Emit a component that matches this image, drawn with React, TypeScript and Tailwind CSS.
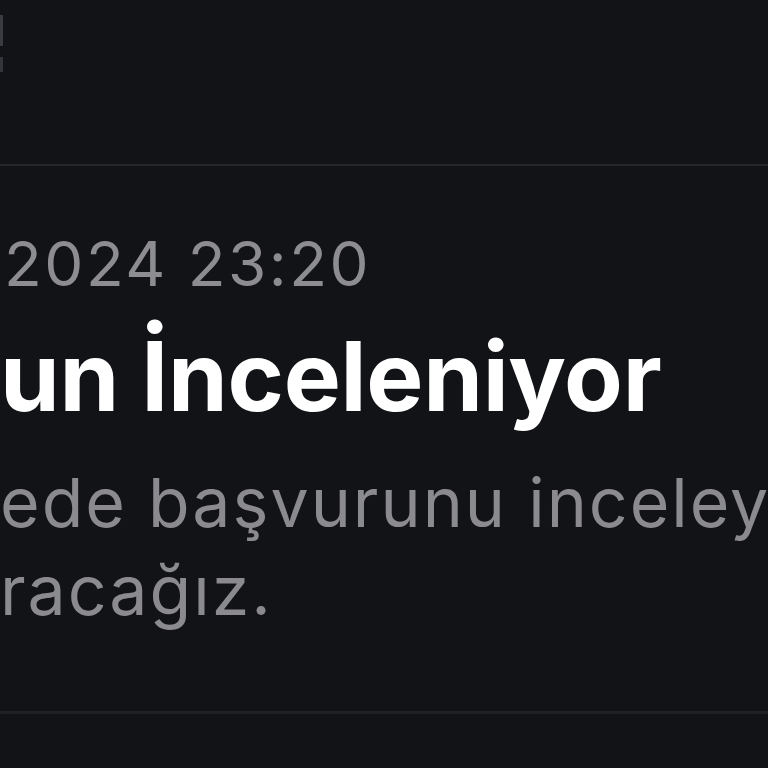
import React from 'react';

const App: React.FC = () => {
  return (
    <div
      className="w-[768px] h-[768px] overflow-hidden bg-[#121317] flex flex-col"
      style={{ fontFamily: 'Inter, "Noto Sans", sans-serif' }}
    >
      {/* header strip, mostly cropped */}
      <div className="h-[164px] relative shrink-0">
        <div className="absolute left-0 top-[15px] w-[3px] h-[31px] bg-[#3a3b40]" />
        <div className="absolute left-0 top-[57px] w-[3px] h-[15px] bg-[#34353a]" />
      </div>
      <div className="h-[2px] bg-[#26272b] shrink-0" />

      <div className="flex flex-col pt-[58px] whitespace-nowrap">
        <p className="text-[62px] leading-[80px] text-[#8c8c91] pl-[4px] tracking-[2.5px]">2024 23:20</p>
        <h1 className="text-[96px] leading-[120px] font-bold text-white tracking-[-0.3px] mt-[12px]">un İnceleniyor</h1>
        <p className="text-[68px] leading-[88px] text-[#8a8a8f] tracking-[2px] mt-[22px]">
          ede başvurunu inceley
          <br />
          racağız.
        </p>
      </div>

      <div className="mt-auto mb-[54px] h-[3px] bg-[#1f2024] shrink-0" />
    </div>
  );
};

export default App;
